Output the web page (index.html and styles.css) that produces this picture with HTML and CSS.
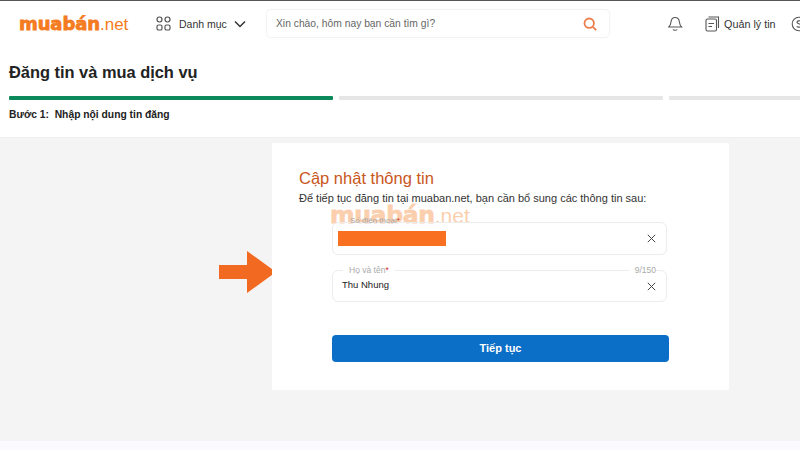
FILE: index.html
```
<!DOCTYPE html>
<html lang="vi">
<head>
<meta charset="utf-8">
<title>Đăng tin và mua dịch vụ</title>
<link rel="stylesheet" href="styles.css">
</head>
<body>
<div class="page">
  <header class="topbar">
    <div class="logo"><span class="logo-main">muabán</span><span class="logo-net">.net</span></div>
    <div class="menu">
      <svg class="ic-grid" width="15" height="15" viewBox="0 0 15 15" fill="none" stroke="#555" stroke-width="1.2"><rect x="1" y="1" width="5" height="5" rx="2.4"/><rect x="9" y="1" width="5" height="5" rx="2.4"/><rect x="1" y="9" width="5" height="5" rx="1.6"/><rect x="9" y="9" width="5" height="5" rx="1.6"/></svg>
      <span class="menu-text">Danh mục</span>
      <svg width="12" height="8" viewBox="0 0 12 8" fill="none" stroke="#333" stroke-width="1.5"><path d="M1 1.500l5 5 5-5"/></svg>
    </div>
    <div class="search">
      <span class="search-text">Xin chào, hôm nay bạn cần tìm gì?</span>
      <svg width="14" height="14" viewBox="0 0 14 14" fill="none" stroke="#ee7c4a" stroke-width="1.8"><circle cx="6.200" cy="6.200" r="4.700"/><path d="M9.800 9.800l3.400 3.400"/></svg>
    </div>
    <div class="actions">
      <svg class="ic-bell" width="15" height="16" viewBox="0 0 15 16" fill="none" stroke="#555" stroke-width="1.1"><path d="M7 1.500c-2.500 0-3.700 2-4 4.500-.2 2-.9 3.700-2.200 5h12.800c-1.300-1.300-2-3-2.200-5-.3-2.500-1.700-4.500-4.400-4.500z"/><path d="M5 13.500c.6 1 3.400 1 4.200 0"/></svg>
      <div class="manage">
        <svg width="15" height="16" viewBox="0 0 15 16" fill="none" stroke="#555" stroke-width="1.1"><rect x="1" y="3" width="10.500" height="12" rx="1.500"/><path d="M3.500 1h10v11"/><path d="M3.500 7.500h5.500M3.500 10.500h3.500"/></svg>
        <span class="manage-text">Quản lý tin</span>
      </div>
      <svg class="ic-coin" width="15" height="16" viewBox="0 0 15 16" fill="none" stroke="#555" stroke-width="1.1"><circle cx="8" cy="8" r="6.800"/><path d="M10 5.500c-1-1-4-1-4 .8s4 1.200 4 3.200-3 2-4.300.8"/></svg>
    </div>
  </header>

  <section class="steps">
    <h1 class="title">Đăng tin và mua dịch vụ</h1>
    <div class="bars">
      <div class="bar bar-active"></div>
      <div class="bar"></div>
      <div class="bar"></div>
    </div>
    <p class="step-label">Bước 1:&nbsp; Nhập nội dung tin đăng</p>
  </section>

  <main class="content">
    <svg class="arrow" width="60" height="42" viewBox="0 0 60 42"><path fill="#f26a21" d="M0 14h28V0l29 21-29 21V28H0z"/></svg>
    <div class="card">
      <h2 class="card-title">Cập nhật thông tin</h2>
      <p class="card-desc">Để tiếp tục đăng tin tại muaban.net, bạn cần bổ sung các thông tin sau:</p>
      <div class="watermark"><span class="wm-main">muabán</span><span class="wm-net">.net</span></div>
      <div class="form">
        <div class="field field-phone">
          <span class="legend">Số điện thoại<i>*</i></span>
          <span class="redact"></span>
          <svg class="close" width="9" height="9" viewBox="0 0 9 9" stroke="#444" stroke-width="1" fill="none"><path d="M.8.8l7.400 7.400M8.200.8L.8 8.200"/></svg>
        </div>
        <div class="field field-name">
          <span class="legend legend-line">Họ và tên<i>*</i></span>
          <span class="counter">9/150</span>
          <span class="value">Thu Nhung</span>
          <svg class="close" width="9" height="9" viewBox="0 0 9 9" stroke="#444" stroke-width="1" fill="none"><path d="M.8.8l7.400 7.400M8.200.8L.8 8.200"/></svg>
        </div>
        <button class="submit" type="button">Tiếp tục</button>
      </div>
    </div>
  </main>
  <div class="footer-strip"></div>
</div>
</body>
</html>
```
FILE: styles.css
```
* { box-sizing: border-box; }
html, body { margin: 0; padding: 0; }
body { width: 800px; height: 450px; overflow: hidden; background: #fff; font-family: "Liberation Sans", Arial, sans-serif; color: #222; }
.page { width: 800px; height: 450px; display: flex; flex-direction: column; overflow: hidden; }

.topbar { height: 46px; flex: none; border-top: 1px solid #555; display: flex; align-items: center; padding-left: 19px; white-space: nowrap; }
.logo { width: 137px; flex: none; }
.logo-main { font-family: "DejaVu Sans", sans-serif; font-size: 18px; font-weight: 700; color: #f47b20; -webkit-text-stroke: 0.8px #f47b20; letter-spacing: -0.1px; }
.logo-net { font-size: 17px; color: #f47b20; }
.menu { display: flex; align-items: center; width: 110px; flex: none; }
.menu-text { font-size: 10.500px; color: #333; margin: 0 7px 0 8px; }
.search { width: 344px; height: 29px; flex: none; border: 1px solid #f3f3f3; border-radius: 5px; display: flex; align-items: center; justify-content: space-between; padding: 0 12px 0 9px; box-shadow: 0 0 2px rgba(0,0,0,.03); }
.search-text { font-size: 10.300px; color: #666; }
.actions { display: flex; align-items: center; margin-left: 58px; }
.manage { display: flex; align-items: center; margin-left: 22px; }
.manage-text { font-size: 10.800px; color: #333; margin-left: 4px; }
.ic-coin { margin-left: 15px; flex: none; }

.steps { height: 92px; flex: none; padding: 0 0 0 9px; border-bottom: 1px solid #f0f0f0; overflow: hidden; }
.title { margin: 16px 0 0; font-size: 16.400px; line-height: 20px; font-weight: 700; color: #222; }
.bars { display: flex; gap: 6px; margin-top: 14px; width: 900px; }
.bar { width: 324px; height: 4px; background: #e6e6e6; flex: none; border-radius: 1px; }
.bar-active { background: #0d8a5c; }
.step-label { margin: 8px 0 0; font-size: 10.300px; line-height: 14px; font-weight: 700; color: #222; }

.content { position: relative; height: 303px; flex: none; background: #f4f4f4; padding: 5px 0 0 272px; }
.arrow { position: absolute; left: 219px; top: 113px; }
.card { position: relative; width: 457px; height: 247px; background: #fff; border-radius: 2px; padding: 25px 0 0 27px; }
.card-title { margin: 0; font-size: 16.500px; line-height: 20px; font-weight: 400; color: #c9561b; }
.card-desc { margin: 3px 0 0; font-size: 11px; line-height: 14px; color: #333; white-space: nowrap; }
.watermark { position: absolute; left: 58px; top: 58px; white-space: nowrap; opacity: .36; }
.wm-main { font-family: "DejaVu Sans", sans-serif; font-size: 23.500px; font-weight: 700; color: #f47b20; -webkit-text-stroke: 0.8px #f47b20; letter-spacing: -0.3px; }
.wm-net { font-size: 21px; color: #f47b20; }
.form { position: relative; width: 337px; margin: 0 0 0 33px; }
.field { position: relative; width: 335px; height: 32px; border: 1px solid #ececec; border-radius: 6px; display: flex; align-items: center; justify-content: space-between; padding: 0 10px 0 9px; background: transparent; }
.field-phone { margin-top: 17px; height: 33px; }
.field-name { margin-top: 15px; }
.legend { position: absolute; left: 16px; top: -7px; font-size: 8px; line-height: 10px; color: #aaa; padding: 0 1px; }
.legend i { color: #c9302c; font-style: normal; }
.legend-line { background: #fff; padding: 0 6px; left: 10px; top: -6px; font-size: 8.500px; }
.counter { position: absolute; right: 10px; top: -6px; font-size: 8.500px; line-height: 10px; color: #aaa; background: #fff; padding: 0 0 0 6px; }
.redact { width: 108px; height: 15px; margin-left: -4px; background: #f97120; }
.value { font-size: 9.500px; line-height: 12px; margin-bottom: 2px; color: #222; }
.close { flex: none; }
.submit { display: block; width: 337px; height: 27px; margin-top: 33px; padding-bottom: 2px; border: 0; border-radius: 4px; background: #0b6fc7; color: #fff; font: 700 11px "Liberation Sans", Arial, sans-serif; }
.footer-strip { flex: 1; background: #fbfaff; }
```
